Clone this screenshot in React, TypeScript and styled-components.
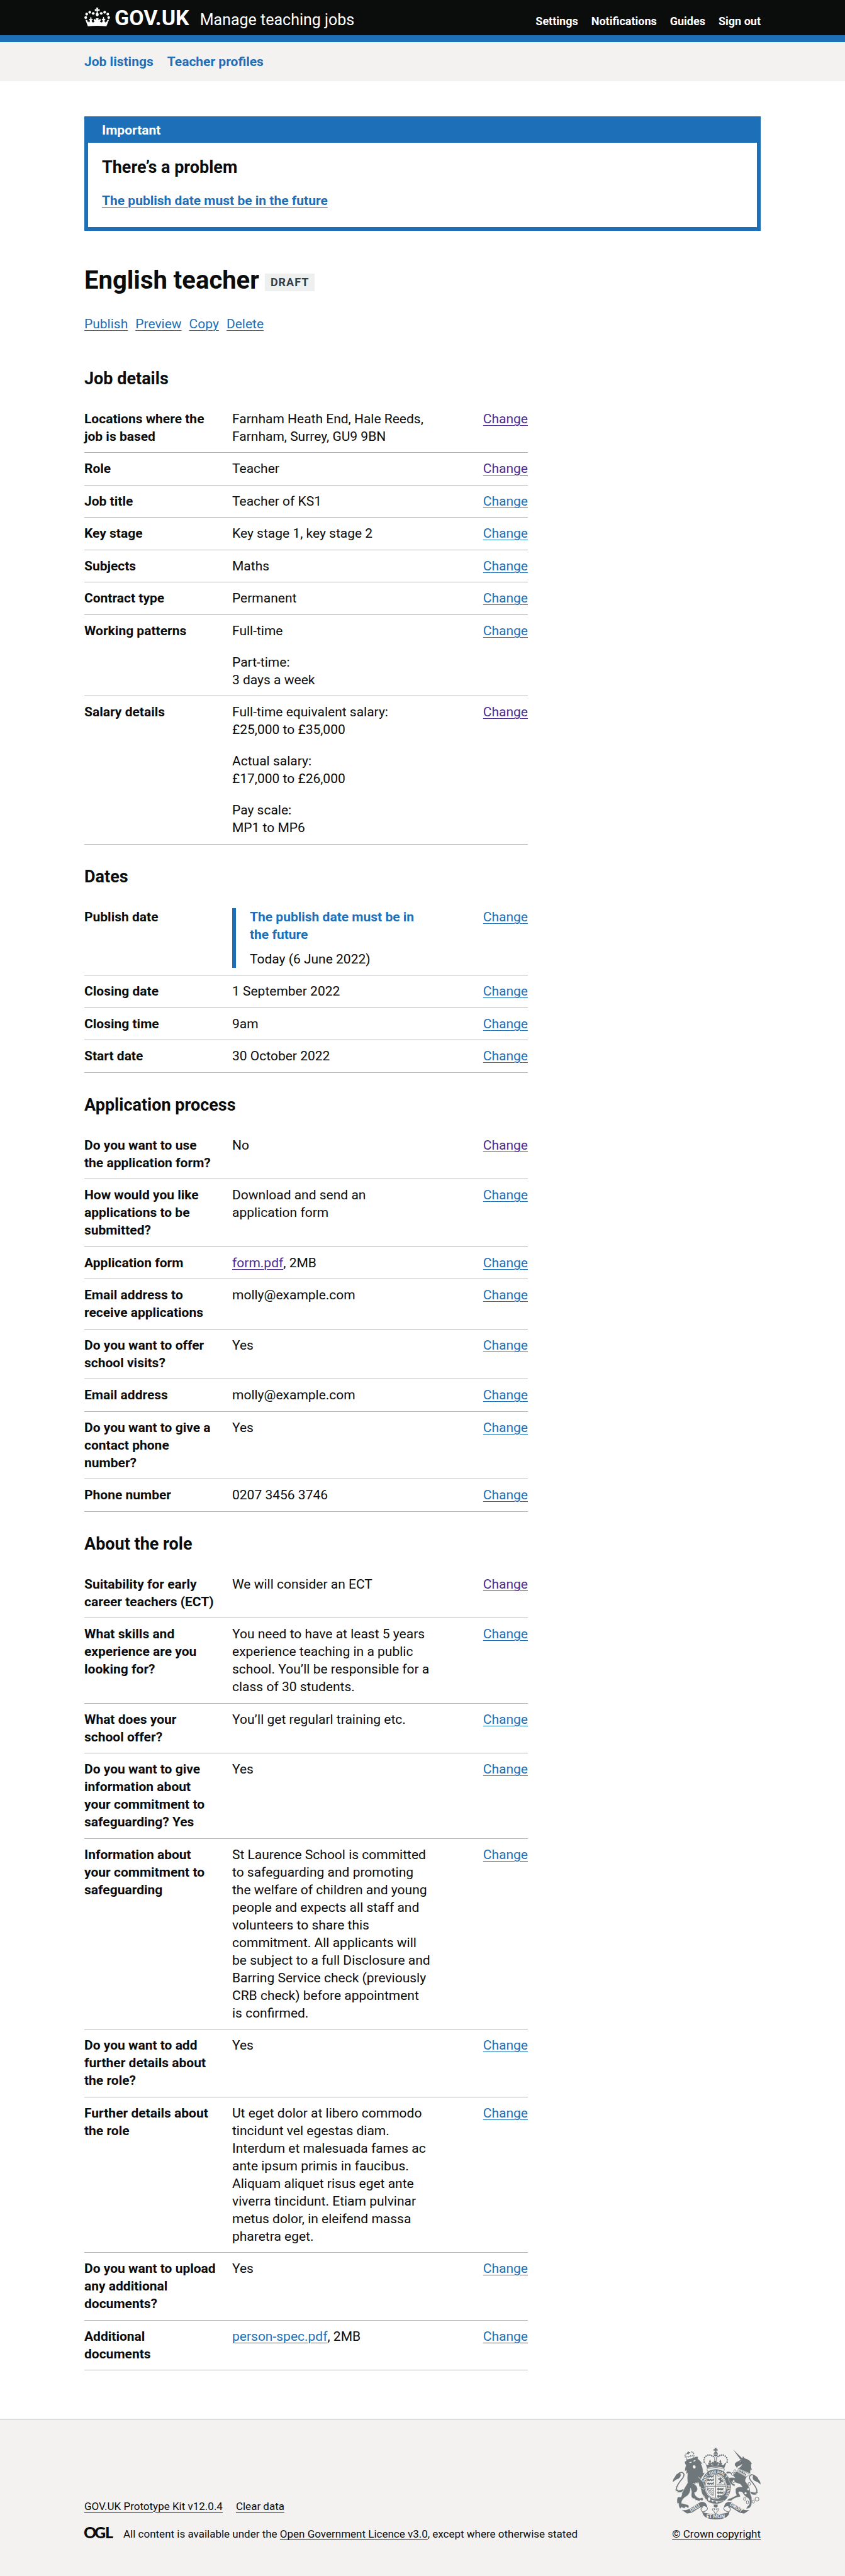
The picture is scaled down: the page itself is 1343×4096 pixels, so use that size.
import React from "react";
import styled, { createGlobalStyle, css } from "styled-components";

const color = {
  text: "#0b0c0c",
  brand: "#1d70b8",
  visited: "#4c2c92",
  border: "#b1b4b6",
  canvas: "#f3f2f1",
  white: "#ffffff",
  crest: "#6f777b",
  tagText: "#383f43",
  tagBackground: "#eeefef",
};

const GlobalStyle = createGlobalStyle`
  *, *::before, *::after { box-sizing: border-box; }
  body {
    margin: 0;
    background: ${color.white};
    color: ${color.text};
    font-family: Roboto, "Liberation Sans", Arial, sans-serif;
    font-size: 21px;
    line-height: 28px;
  }
`;

const Container = styled.div`
  max-width: 1075px;
  margin: 0 auto;
`;

const linkStyle = css`
  text-decoration: underline;
  text-decoration-thickness: 1px;
  text-underline-offset: 3px;
`;

const Link = styled.a<{ $visited?: boolean; $bold?: boolean }>`
  ${linkStyle}
  color: ${(p) => (p.$visited ? color.visited : color.brand)};
  font-weight: ${(p) => (p.$bold ? 700 : 400)};
`;

/* ---------- Header ---------- */

const Header = styled.header`
  background: ${color.text};
  border-bottom: 11px solid ${color.brand};
`;

const HeaderRow = styled(Container)`
  display: flex;
  align-items: baseline;
  justify-content: space-between;
  padding: 11px 0;
`;

const Brand = styled.a`
  display: flex;
  align-items: baseline;
  color: ${color.white};
  text-decoration: none;
  line-height: 34px;
`;

const CrownIcon = styled.svg`
  display: block;
  width: 41px;
  height: 30px;
  margin: 1px 7px 0 0;
  align-self: flex-start;
  fill: ${color.white};
`;

const Logotype = styled.span`
  font-size: 34px;
  font-weight: 700;
  margin-right: 17px;
`;

const ProductName = styled.span`
  font-size: 25px;
  line-height: 26px;
`;

const HeaderNav = styled.nav`
  display: flex;
  gap: 21px;
`;

const HeaderLink = styled.a`
  color: ${color.white};
  font-size: 18px;
  font-weight: 700;
  line-height: 22px;
  text-decoration: none;
`;

const PrimaryNav = styled.nav`
  background: ${color.canvas};
`;

const PrimaryNavRow = styled(Container)`
  display: flex;
  gap: 22px;
  padding: 17px 0;
`;

const PrimaryLink = styled.a`
  color: ${color.brand};
  font-weight: 700;
  text-decoration: none;
`;

/* ---------- Main ---------- */

const Main = styled(Container).attrs({ as: "main" })`
  padding: 56px 0 77px;
`;

const Banner = styled.section`
  border: 6px solid ${color.brand};
`;

const BannerTitle = styled.h2`
  margin: 0;
  padding: 2px 22px 6px;
  background: ${color.brand};
  color: ${color.white};
  font-size: 21px;
  line-height: 28px;
`;

const BannerBody = styled.div`
  display: flex;
  flex-direction: column;
  align-items: flex-start;
  gap: 22px;
  padding: 22px 22px 28px;
`;

const Heading = styled.h2`
  margin: 0;
  font-size: 27px;
  font-weight: 700;
  line-height: 34px;
`;

const TitleRow = styled.div`
  display: flex;
  align-items: flex-end;
  gap: 9px;
  margin: 56px 0 33px;
`;

const Title = styled.h1`
  margin: 0;
  font-size: 40px;
  font-weight: 700;
  line-height: 45px;
`;

const Tag = styled.strong`
  margin-bottom: 5px;
  padding: 0 9px;
  background: ${color.tagBackground};
  color: ${color.tagText};
  font-size: 18px;
  letter-spacing: 1px;
  text-transform: uppercase;
`;

const JobActions = styled.div`
  display: flex;
  gap: 12px;
  margin-bottom: 22px;
`;

const Section = styled.section`
  max-width: 705px;
  padding-top: 34px;
`;

const SummaryList = styled.dl`
  margin: 22px 0 0;
`;

const SummaryRow = styled.div`
  display: grid;
  grid-template-columns: 211fr 322fr 124fr;
  column-gap: 24px;
  padding: 11px 0;
  border-bottom: 1px solid ${color.border};

  &:nth-child(even) {
    padding-bottom: 12px;
  }
`;

const Key = styled.dt`
  font-weight: 700;
  white-space: pre-line;
`;

const Value = styled.dd`
  margin: 0;
  white-space: pre-line;
`;

const Action = styled.dd`
  margin: 0;
  text-align: right;
`;

const Paragraphs = styled.div`
  display: flex;
  flex-direction: column;
  gap: 22px;
`;

const Paragraph = styled.p`
  margin: 0;
`;

const Inset = styled.div`
  display: flex;
  flex-direction: column;
  gap: 11px;
  padding-left: 22px;
  border-left: 6px solid ${color.brand};
`;

const InsetMessage = styled.p`
  margin: 0;
  color: ${color.brand};
  font-weight: 700;
`;

/* ---------- Footer ---------- */

const Footer = styled.footer`
  background: ${color.canvas};
  border-top: 1px solid ${color.border};
  font-size: 17px;
  line-height: 22px;
`;

const FooterRow = styled(Container)`
  display: flex;
  align-items: flex-end;
  justify-content: space-between;
  padding: 45px 0 56px;
`;

const FooterLink = styled.a`
  ${linkStyle}
  color: ${color.text};
`;

const FooterMeta = styled.div`
  display: flex;
  flex-direction: column;
  gap: 22px;
`;

const FooterLinks = styled.div`
  display: flex;
  gap: 21px;
`;

const Licence = styled.div`
  display: flex;
  align-items: center;
  gap: 16px;
`;

const OglLogo = styled.svg`
  display: block;
  width: 46px;
  height: 22px;
  overflow: visible;
  fill: ${color.text};
  font-family: Lato, sans-serif;
  font-size: 25px;
  font-weight: 900;
`;

const Copyright = styled.div`
  display: flex;
  flex-direction: column;
  align-items: center;
  gap: 12px;
`;

const CrestArt = styled.svg`
  display: block;
  width: 140px;
  height: 114px;
  fill: ${color.crest};
  stroke: none;
  font-family: Lato, sans-serif;
  font-weight: 900;
`;

/* ---------- Drawings ---------- */

function Crown() {
  const beads = [
    [41, 118],
    [49, 89],
    [75, 73],
    [104, 83],
  ];
  return (
    <CrownIcon viewBox="29 34 218 158" aria-hidden="true">
      {beads.map(([x, y]) => (
        <g key={x}>
          <circle cx={x} cy={y} r="11.5" />
          <circle cx={276 - x} cy={y} r="11.5" />
        </g>
      ))}
      <path d="M129 34h19l-5 15q8 0 15-5v21q-7-5-15-5l-1 14q10 10 9 20-2 12-13 14-11-2-13-14-1-10 9-20l-1-14q-8 0-15 5v-21q7 5 15 5z" />
      <path d="M38 136l16 4 1 15 7-8q1 14 10 11l5-15-8-6 2-9 9 3-1-10 5-11 6 11-1 10 9-3 2 9-9 5q2 17 13 17 12-2 13-11l-8 1v-20l9 4 12 4-4-14h24l-4 14 12-4 9-4v20l-8-1q2 9 13 11 12 0 13-17l-9-5 2-9 9 3-1-10 6-11 5 11-1 10 9-3 2 9-8 6 5 15q9 3 10-11l7 8 1-15 16-4-22 56q-78-9-157 0z" />
    </CrownIcon>
  );
}

function Supporter() {
  return (
    <g>
      <path d="M375 383q-35 0-45 36-18 16-18 42 22-23 50-31 26-16 13-47z" />
      <path
        d="M360 388q15-13 34-9 25 14 4 46-55 64-55 92 2 28 45 24"
        fill="none"
        stroke={color.crest}
        strokeWidth="9"
      />
      <path d="M330 522q14 12 28 10 22-2 46-12-4 20-24 28l-36 2q14-4 18-8-22 0-32-20z" />
    </g>
  );
}

function RibbonEnd() {
  return (
    <g>
      <path d="M388 700q42 6 82-20l78-48q50-14 62 54-18-24-40-18-30 10-66 36-40 30-74 24z" />
      <path
        d="M570 671q-26 16-14 34l12 12q44-12 40-34"
        fill="none"
        stroke={color.crest}
        strokeWidth="6"
      />
    </g>
  );
}

function Crest() {
  const arch = [
    [580, 289],
    [578, 271],
    [584, 253],
    [596, 239],
    [612, 230],
    [629, 230],
    [644, 235],
    [658, 242],
  ];
  const links = [
    [843, 368],
    [823, 392],
    [832, 453],
    [965, 477],
    [926, 605],
    [950, 634],
    [1000, 628],
  ];
  const beasts = [405, 435, 465];
  return (
    <CrestArt viewBox="311 167 751 613" aria-hidden="true">
      {/* imperial crown */}
      <path d="M668 168h20l-5 12 11-4v19l-11-5 4 12h-18l4-12-12 5v-19l11 4z" />
      <path d="M660 219q4-16 18-17 16 1 19 17zM660 223h37q-2 17-18 18-17-1-19-18z" />
      <path d="M667 246h6v32h-6zM683 246h6v32h-6z" />
      {arch.map(([x, y]) => (
        <g key={`${x}-${y}`}>
          <circle cx={x} cy={y} r="6.5" />
          <circle cx={1356 - x} cy={y} r="6.5" />
        </g>
      ))}
      <path d="M587 294l18 46q73-20 147 0l17-46-12 3-6 14q-12 10-22 0l6-12-6-6-7 7 4-16-8-16-8 16 4 16-8-7-6 6 8 12q-10 14-22 3l14-2v-24l-16 6 3-16h-26l3 16-16-6v24l14 2q-12 11-22-3l8-12-6-6-8 7 4-16-8-16-8 16 4 16-7-7-6 6 6 12q-10 10-22 0l-6-14z" />
      <path
        d="M606 344q-6 14 4 26 68-26 136 0 10-12 4-26-74-14-144 0z"
        fill={color.canvas}
        stroke={color.crest}
        strokeWidth="5"
      />

      {/* garter and shield */}
      <ellipse cx="680" cy="499" rx="128" ry="148" />
      <ellipse cx="678" cy="497" rx="94" ry="108" fill={color.canvas} />
      <ellipse
        cx="678"
        cy="497"
        rx="88"
        ry="102"
        fill="none"
        stroke={color.crest}
        strokeWidth="4"
      />
      <path d="M676 396h5v200h-5zM590 494h176v5H590z" />
      {beasts.map((y) => (
        <g key={y}>
          <path
            d={`M606 ${y + 4}l8-6 10 6 14-4 8 6 12-8 8-4-2 10-6 6 8 10-14-6-8 6-10-8-12 8-10-6-8 4z`}
          />
          <path
            d={`M692 ${y + 110}l8-6 10 6 14-4 8 6 12-8 2 4-4 12 4 8-14-6-8 6-10-8-12 8-10-6z`}
          />
        </g>
      ))}
      <path
        d="M689 404v80h66q-2-54-66-80z"
        fill="none"
        stroke={color.crest}
        strokeWidth="4"
      />
      <path d="M700 426l12 2 10-8 8 12-4 8 12 4 6 20-12-8-8 8 6 12-14-8-14 10 6-16 8-6-4-12-10-2z" />
      <path
        d="M604 510q24 12 58 4-8 30-4 62-42-10-54-66zM616 518q6 26 40 52M628 518q6 22 28 40M640 517q6 14 16 24"
        fill="none"
        stroke={color.crest}
        strokeWidth="5"
      />
      <path
        d="M612 602q60 36 140 18-30 30-76 28-46-2-74-26z"
        stroke={color.canvas}
        strokeWidth="4"
      />
      <circle cx="653" cy="621" r="7" fill={color.canvas} />
      <circle cx="688" cy="631" r="7" fill={color.canvas} />
      <ellipse
        cx="622"
        cy="606"
        rx="13"
        ry="19"
        fill={color.canvas}
        stroke={color.crest}
        strokeWidth="6"
      />
      <path id="garter-left" d="M602 612A103 120 0 0 1 580 465" fill="none" />
      <path id="garter-top" d="M585 463A103 118 0 0 1 784 480" fill="none" />
      <path id="garter-right" d="M775 488A103 120 0 0 1 740 608" fill="none" />
      <g fill={color.canvas} fontSize="31">
        <text>
          <textPath href="#garter-left">HO</textPath>
        </text>
        <text>
          <textPath href="#garter-top">SOIT QUI MAL Y</textPath>
        </text>
        <text>
          <textPath href="#garter-right">PENSE</textPath>
        </text>
      </g>

      {/* lion */}
      <Supporter />
      <path
        d="M412 285q14 0 18-17 40-4 82-26l15 1-1 19q26 16 42 48l-16-5q20 30 18 78l16-4-8 18q-16 16-26 42l-22-22q48 38 60 104l-10-8-6 12-12-14-15 10 3-20-13-2q0-24-10-38l-5 14-14-10-3 14-20-8q36 20 38 48-2 28-26 32 6 38 46 48 26-12 30 8l-10 16-14-10-12 12-22-10-8 3q-4-20-20-15-20-12-17-36 6-24-6-54-2 46-32 68-42 20-46 60l54 14q18 14 2 28l-20-12-12 15-24-10-12 12q-14-16-12-46l-12 4q-8-42 6-58h26q10-16 8-34 18-38 48-86-6-44 0-84l-12 10 2-34-14 10q0-30 10-52l-8-14z"
        stroke={color.canvas}
        strokeWidth="3"
      />
      <path
        d="M450 294l22-8 2 6-14 6zM486 280l18-10 4 6-16 10zM482 322q14-10 24 2 4 18-10 22-14-2-14-24z"
        fill={color.canvas}
      />
      <path
        d="M430 262l-4-18 10-2 8 8 6-12 10 8 4-14 12 10 8-14 10 4-4 22q-30 14-60 18z"
        fill="none"
        stroke={color.crest}
        strokeWidth="5"
      />
      {[
        [418, 246],
        [417, 232],
        [425, 221],
        [437, 217],
        [457, 210],
        [470, 203],
        [483, 205],
        [490, 217],
      ].map(([x, y]) => (
        <circle key={x} cx={x} cy={y} r="5" />
      ))}
      <path d="M440 198h8v8h8v8h-8l2 10h-8v-10l-8 1v-8l7-1z" />

      {/* unicorn */}
      <g transform="translate(1374 20) scale(-1 1)">
        <Supporter />
      </g>
      <path d="M828 183l82 80-20 6z" />
      <path d="M842 305q2-10 34-25l29-17 6-24 16 20q44 10 60 46l-6 4q-4 20 8 52l-12-10q-6 16-2 38l-104-46q28-14 34-38-14 18-36 20l-10 16-10-18-7-4z" />
      <path d="M880 290l16-6-4 7z" fill={color.canvas} />
      <path
        d="M872 345l93 48-19 22-80-46z"
        fill={color.canvas}
        stroke={color.crest}
        strokeWidth="4"
      />
      <path d="M874 366l4-14 8 16 8-12 6 20 10-12 4 20 10-10 4 20 10-8 2 18z" />
      <path
        d="M862 372l83 46q-16 20-13 37 30 36 40 66-4 38 14 68 4 46-1 66-10 34-47 35l10-20q22-14 20-40 2-30-28-40-24-18-35-42-50-16-20 22 10 16-5 18-50 10-68 32l-36 2q4-20 34-25l46-23q-12-24-8-54 16-24 57-18l-15-22-42-14-32-11q-2 18 28 27l-4 16q-40-14-54-66 10-18 57-8-16-24-44-38l-27 3-5-14q30-14 52 12 26 6 30-10z"
        stroke={color.canvas}
        strokeWidth="3"
      />
      {links.map(([x, y]) => (
        <ellipse
          key={`${x}-${y}`}
          cx={x}
          cy={y}
          rx="10"
          ry="13"
          fill={color.canvas}
          stroke={color.crest}
          strokeWidth="5"
        />
      ))}
      <circle cx="957" cy="522" r="9" fill={color.canvas} />
      <circle cx="934" cy="557" r="9" fill={color.canvas} />
      <circle
        cx="1031"
        cy="607"
        r="17"
        fill="none"
        stroke={color.crest}
        strokeWidth="5"
      />

      {/* motto ribbon */}
      <RibbonEnd />
      <g transform="translate(1356 0) scale(-1 1)">
        <RibbonEnd />
      </g>
      <path d="M564 716q50 20 114 20 68 0 118-20-4 64-118 64-108 0-114-64z" />
      <path d="M662 653h33v20h-33z" />
      <path
        d="M678 672q14 14 8 28 6-18 22-10-2 16-16 20l-6 18h-16l-6-18q-14-4-16-20 16-8 22 10-6-14 8-28z"
        fill={color.canvas}
        stroke={color.crest}
        strokeWidth="5"
      />
      <g fill={color.canvas} fontSize="40" textAnchor="middle">
        <text transform="translate(506 693) rotate(-31)" fontSize="38">
          DIEU
        </text>
        <text x="678" y="771">
          ET MON
        </text>
        <text transform="translate(848 690) rotate(31)" fontSize="38">
          DROIT
        </text>
      </g>
    </CrestArt>
  );
}

/* ---------- Content ---------- */

type Item = { label: string; value: React.ReactNode; visited?: boolean };
type Group = { title: string; items: Item[] };

const groups: Group[] = [
  {
    title: "Job details",
    items: [
      {
        label: "Locations where the job is based",
        value: "Farnham Heath End, Hale Reeds,\nFarnham, Surrey, GU9 9BN",
        visited: true,
      },
      { label: "Role", value: "Teacher", visited: true },
      { label: "Job title", value: "Teacher of KS1" },
      { label: "Key stage", value: "Key stage 1, key stage 2" },
      { label: "Subjects", value: "Maths" },
      { label: "Contract type", value: "Permanent" },
      {
        label: "Working patterns",
        value: (
          <Paragraphs>
            <Paragraph>Full-time</Paragraph>
            <Paragraph>{"Part-time:\n3 days a week"}</Paragraph>
          </Paragraphs>
        ),
      },
      {
        label: "Salary details",
        visited: true,
        value: (
          <Paragraphs>
            <Paragraph>
              {"Full-time equivalent salary:\n£25,000 to £35,000"}
            </Paragraph>
            <Paragraph>{"Actual salary:\n£17,000 to £26,000"}</Paragraph>
            <Paragraph>{"Pay scale:\nMP1 to MP6"}</Paragraph>
          </Paragraphs>
        ),
      },
    ],
  },
  {
    title: "Dates",
    items: [
      {
        label: "Publish date",
        value: (
          <Inset>
            <InsetMessage>
              {"The publish date must be in\nthe future"}
            </InsetMessage>
            <Paragraph>Today (6 June 2022)</Paragraph>
          </Inset>
        ),
      },
      { label: "Closing date", value: "1 September 2022" },
      { label: "Closing time", value: "9am" },
      { label: "Start date", value: "30 October 2022" },
    ],
  },
  {
    title: "Application process",
    items: [
      {
        label: "Do you want to use the application form?",
        value: "No",
        visited: true,
      },
      {
        label: "How would you like applications to be submitted?",
        value: "Download and send an\napplication form",
      },
      {
        label: "Application form",
        value: (
          <>
            <Link href="#form" $visited>
              form.pdf
            </Link>
            , 2MB
          </>
        ),
      },
      {
        label: "Email address to receive applications",
        value: "molly@example.com",
      },
      { label: "Do you want to offer school visits?", value: "Yes" },
      { label: "Email address", value: "molly@example.com" },
      { label: "Do you want to give a contact phone number?", value: "Yes" },
      { label: "Phone number", value: "0207 3456 3746" },
    ],
  },
  {
    title: "About the role",
    items: [
      {
        label: "Suitability for early career teachers (ECT)",
        value: "We will consider an ECT",
        visited: true,
      },
      {
        label: "What skills and experience are you looking for?",
        value:
          "You need to have at least 5 years\nexperience teaching in a public\nschool. You’ll be responsible for a\nclass of 30 students.",
      },
      {
        label: "What does your school offer?",
        value: "You’ll get regularl training etc.",
      },
      {
        label:
          "Do you want to give information about your commitment to safeguarding? Yes",
        value: "Yes",
      },
      {
        label: "Information about your commitment to safeguarding",
        value:
          "St Laurence School is committed\nto safeguarding and promoting\nthe welfare of children and young\npeople and expects all staff and\nvolunteers to share this\ncommitment. All applicants will\nbe subject to a full Disclosure and\nBarring Service check (previously\nCRB check) before appointment\nis confirmed.",
      },
      {
        label: "Do you want to add further details about the role?",
        value: "Yes",
      },
      {
        label: "Further details about the role",
        value:
          "Ut eget dolor at libero commodo\ntincidunt vel egestas diam.\nInterdum et malesuada fames ac\nante ipsum primis in faucibus.\nAliquam aliquet risus eget ante\nviverra tincidunt. Etiam pulvinar\nmetus dolor, in eleifend massa\npharetra eget.",
      },
      {
        label: "Do you want to upload any additional documents?",
        value: "Yes",
      },
      {
        label: "Additional\ndocuments",
        value: (
          <>
            <Link href="#person-spec">person-spec.pdf</Link>, 2MB
          </>
        ),
      },
    ],
  },
];

export default function App() {
  return (
    <>
      <GlobalStyle />
      <Header>
        <HeaderRow>
          <Brand href="#home">
            <Crown />
            <Logotype>GOV.UK</Logotype>
            <ProductName>Manage teaching jobs</ProductName>
          </Brand>
          <HeaderNav aria-label="Account">
            {["Settings", "Notifications", "Guides", "Sign out"].map((name) => (
              <HeaderLink key={name} href="#account">
                {name}
              </HeaderLink>
            ))}
          </HeaderNav>
        </HeaderRow>
      </Header>
      <PrimaryNav aria-label="Primary">
        <PrimaryNavRow>
          <PrimaryLink href="#jobs">Job listings</PrimaryLink>
          <PrimaryLink href="#profiles">Teacher profiles</PrimaryLink>
        </PrimaryNavRow>
      </PrimaryNav>

      <Main>
        <Banner aria-labelledby="banner-title">
          <BannerTitle id="banner-title">Important</BannerTitle>
          <BannerBody>
            <Heading as="h3">There’s a problem</Heading>
            <Link href="#publish-date" $bold>
              The publish date must be in the future
            </Link>
          </BannerBody>
        </Banner>

        <TitleRow>
          <Title>English teacher</Title>
          <Tag>Draft</Tag>
        </TitleRow>
        <JobActions>
          {["Publish", "Preview", "Copy", "Delete"].map((name) => (
            <Link key={name} href="#job">
              {name}
            </Link>
          ))}
        </JobActions>

        {groups.map((group) => (
          <Section key={group.title}>
            <Heading>{group.title}</Heading>
            <SummaryList>
              {group.items.map((item) => (
                <SummaryRow key={item.label}>
                  <Key>{item.label}</Key>
                  <Value>{item.value}</Value>
                  <Action>
                    <Link href="#change" $visited={item.visited}>
                      Change
                    </Link>
                  </Action>
                </SummaryRow>
              ))}
            </SummaryList>
          </Section>
        ))}
      </Main>

      <Footer>
        <FooterRow>
          <FooterMeta>
            <FooterLinks>
              <FooterLink href="#kit">GOV.UK Prototype Kit v12.0.4</FooterLink>
              <FooterLink href="#clear">Clear data</FooterLink>
            </FooterLinks>
            <Licence>
              <OglLogo viewBox="0 0 46 22" aria-hidden="true">
                <text x="-1" y="18">
                  O
                </text>
                <text x="16" y="18">
                  G
                </text>
                <text x="33" y="18">
                  L
                </text>
              </OglLogo>
              <span>
                All content is available under the{" "}
                <FooterLink href="#licence">
                  Open Government Licence v3.0
                </FooterLink>
                , except where otherwise stated
              </span>
            </Licence>
          </FooterMeta>
          <Copyright>
            <Crest />
            <FooterLink href="#copyright">© Crown copyright</FooterLink>
          </Copyright>
        </FooterRow>
      </Footer>
    </>
  );
}
